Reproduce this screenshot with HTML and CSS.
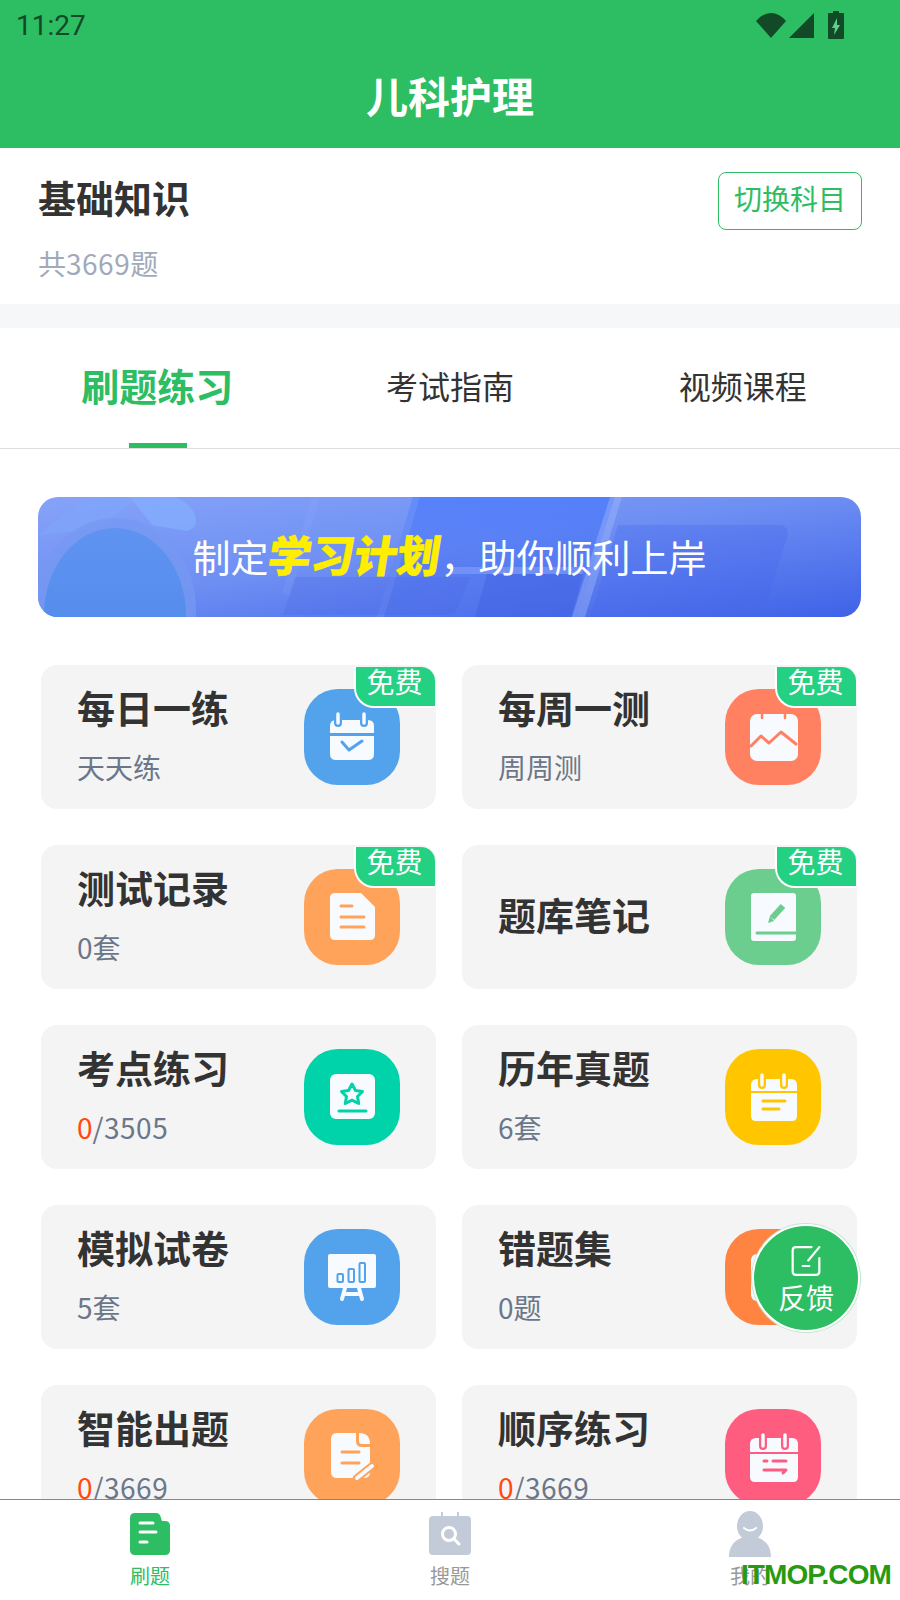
FILE: index.html
```html
<!DOCTYPE html>
<html lang="zh-CN">
<head>
  <meta charset="UTF-8">
  <meta name="viewport" content="width=device-width, initial-scale=1.0">
  <title>儿科护理</title>
  <link rel="stylesheet" href="styles.css">
</head>
<body>

<div class="page">
  <header class="header">
    <div class="status-bar">
      <span class="time">11:27</span>
      <div class="status-icons">
        <svg width="32" height="26" viewBox="0 0 32 26"><path d="M16 26 1 9Q8 1 16 1t15 8z"/></svg>
        <svg width="25" height="25" viewBox="0 0 25 25"><path d="M25 0v25H0z"/></svg>
        <svg width="18" height="28" viewBox="0 0 18 28"><path d="M6 0h6v2h4a1 1 0 0 1 1 1v24a1 1 0 0 1-1 1H2a1 1 0 0 1-1-1V3a1 1 0 0 1 1-1h4z"/><path class="bolt" d="M10 7 5 17h3l-1 7 6-10h-3z"/></svg>
      </div>
    </div>
    <h1 class="page-title">儿科护理</h1>
  </header>

  <main class="content">
    <section class="subject">
      <div>
        <h2 class="subject-name">基础知识</h2>
        <p class="subject-count">共<span class="digits">3669</span>题</p>
      </div>
      <button class="switch-btn">切换科目</button>
    </section>

    <nav class="tabs">
      <div class="tab active">刷题练习</div>
      <div class="tab">考试指南</div>
      <div class="tab">视频课程</div>
    </nav>

    <div class="banner">
      <svg class="banner-art" width="823" height="120" viewBox="0 0 823 120">
        <defs>
          <linearGradient id="deep" x1="0" y1="0" x2="0" y2="1">
            <stop offset="0" stop-color="#3f72ff" stop-opacity=".6"/>
            <stop offset="1" stop-color="#3f62e8" stop-opacity=".15"/>
          </linearGradient>
          <linearGradient id="face" x1="0" y1="0" x2="0" y2="1">
            <stop offset="0" stop-color="#5f93f2"/>
            <stop offset="1" stop-color="#4c88e6"/>
          </linearGradient>
        </defs>
        <!-- clock -->
        <path d="M0 38 50 0h50L60 32z" fill="#7fa6fa" opacity=".6"/>
        <path d="M92 0h46q20 10 20 24 0 8-10 10l-34-6z" fill="#83adfd" opacity=".8"/>
        <ellipse cx="77" cy="112" rx="81" ry="91" fill="#7598f2" opacity=".75"/>
        <ellipse cx="77" cy="118" rx="71" ry="87" fill="url(#face)"/>
        <!-- slanted panels -->
        <path d="M375 0h202l-38 120H339z" fill="url(#deep)"/>
        <path d="M375 0h7l-36 120h-7z" fill="#9db6fb" opacity=".2"/>
        <path d="M572 0h12l-37 120h-13z" fill="#a5bbfb" opacity=".4"/>
        <path d="M274 0h8l-30 100-8-4z" fill="#9db6fb" opacity=".12"/>
        <path d="M412 70h128q5 0 5 7H412z" fill="#a5bbfb" opacity=".35"/>
        <path d="M245 118l12-38h175l-12 30q-3 8-12 8z" fill="#3f5fe0" opacity=".2"/>
        <path d="M437 120l12-43h96l-12 43z" fill="#3c5ce0" opacity=".4"/>
        <path d="M580 28h160q12 0 9 12l-25 80H552z" fill="#4568ea" opacity=".3"/>
      </svg>
      <p class="banner-text">制定<em>学习计划</em>，助你顺利上岸</p>
    </div>

    <div class="grid">
      <div class="card">
        <div>
          <h3 class="card-title">每日一练</h3>
          <p class="card-sub">天天练</p>
        </div>
        <div class="tile blue">
          <svg width="96" height="96" viewBox="0 0 96 96">
            <path class="glyph" d="M26 44v-7q0-6 6-6h32q6 0 6 6v7zM26 47h44v18q0 6-6 6H32q-6 0-6-6z"/>
            <path class="halo" d="M34 25v9M60 25v9"/>
            <path class="ring" d="M34 25v9M60 25v9"/>
            <path class="mark" d="M38 53l7 8 13-9"/>
          </svg>
        </div>
        <span class="free">免费</span>
      </div>

      <div class="card">
        <div>
          <h3 class="card-title">每周一测</h3>
          <p class="card-sub">周周测</p>
        </div>
        <div class="tile coral">
          <svg width="96" height="96" viewBox="0 0 96 96">
            <rect class="glyph" x="25" y="25" width="48" height="47" rx="7"/>
            <path class="mark thin" d="M37 25v4M60 25v4"/>
            <path class="mark" d="M26 57l10-10 8 7 12-11 15 12"/>
          </svg>
        </div>
        <span class="free">免费</span>
      </div>

      <div class="card">
        <div>
          <h3 class="card-title">测试记录</h3>
          <p class="card-sub">0套</p>
        </div>
        <div class="tile orange">
          <svg width="96" height="96" viewBox="0 0 96 96">
            <path class="glyph" d="M31 24h26l14 14v28q0 5-5 5H31q-5 0-5-5V29q0-5 5-5z"/>
            <path class="mark" d="M37 37h11M37 48h23M37 58h23"/>
          </svg>
        </div>
        <span class="free">免费</span>
      </div>

      <div class="card">
        <h3 class="card-title">题库笔记</h3>
        <div class="tile green">
          <svg width="96" height="96" viewBox="0 0 96 96">
            <rect class="glyph" x="26" y="24" width="45" height="48" rx="3"/>
            <path class="mark" d="M32 64h39"/>
            <path class="mark pen" d="M58 37 47 49"/>
            <path class="solid" d="M45 47l-2 7 6-2z"/>
          </svg>
        </div>
        <span class="free">免费</span>
      </div>

      <div class="card">
        <div>
          <h3 class="card-title">考点练习</h3>
          <p class="card-sub"><span class="done">0</span><span class="digits">/3505</span></p>
        </div>
        <div class="tile teal">
          <svg width="96" height="96" viewBox="0 0 96 96">
            <rect class="glyph" x="26" y="25" width="45" height="45" rx="6"/>
            <path class="mark" d="M48 35l3.500 6.500 7 1-5 5 1.200 7-6.700-3.300-6.700 3.300 1.200-7-5-5 7-1z"/>
            <path class="mark" d="M35 62h27"/>
          </svg>
        </div>
      </div>

      <div class="card">
        <div>
          <h3 class="card-title">历年真题</h3>
          <p class="card-sub">6套</p>
        </div>
        <div class="tile yellow">
          <svg width="96" height="96" viewBox="0 0 96 96">
            <path class="glyph" d="M26 42v-6q0-6 6-6h34q6 0 6 6v6zM26 44h46v23q0 5-5 5H31q-5 0-5-5z"/>
            <path class="halo" d="M37 26v10M59 26v10"/>
            <path class="ring" d="M37 26v10M59 26v10"/>
            <path class="mark" d="M38 52h22M38 60h16"/>
          </svg>
        </div>
      </div>

      <div class="card">
        <div>
          <h3 class="card-title">模拟试卷</h3>
          <p class="card-sub">5套</p>
        </div>
        <div class="tile blue">
          <svg width="96" height="96" viewBox="0 0 96 96">
            <rect class="glyph" x="24" y="25" width="48" height="34" rx="2"/>
            <rect class="bar" x="33.500" y="45" width="5.500" height="8" rx="1"/>
            <rect class="bar" x="44.500" y="40" width="5.500" height="13" rx="1"/>
            <rect class="bar" x="55.500" y="34" width="5.500" height="19" rx="1"/>
            <path class="leg" d="M41 59l-3 11M55 59l3 11M40 65h16"/>
          </svg>
        </div>
      </div>

      <div class="card">
        <div>
          <h3 class="card-title">错题集</h3>
          <p class="card-sub">0题</p>
        </div>
        <div class="tile deep-orange">
          <svg width="96" height="96" viewBox="0 0 96 96">
            <rect class="glyph" x="26" y="25" width="45" height="47" rx="6"/>
          </svg>
        </div>
      </div>

      <div class="card">
        <div>
          <h3 class="card-title">智能出题</h3>
          <p class="card-sub"><span class="done">0</span><span class="digits">/3669</span></p>
        </div>
        <div class="tile orange">
          <svg width="96" height="96" viewBox="0 0 96 96">
            <path class="glyph" d="M33 24h19v8q0 6 6 6h8v25q0 6-6 6H33q-6 0-6-6V30q0-6 6-6zM55 24q11 0 11 11h-8q-3 0-3-3z"/>
            <path class="mark" d="M38 43h17M38 54h17"/>
            <path class="halo" d="M53 69 68 57"/>
            <path class="leg" d="M53 69 68 57"/>
          </svg>
        </div>
      </div>

      <div class="card">
        <div>
          <h3 class="card-title">顺序练习</h3>
          <p class="card-sub"><span class="done">0</span><span class="digits">/3669</span></p>
        </div>
        <div class="tile pink">
          <svg width="96" height="96" viewBox="0 0 96 96">
            <path class="glyph" d="M25 43v-8q0-6 6-6h36q6 0 6 6v8zM25 45h48v23q0 5-5 5H30q-5 0-5-5z"/>
            <path class="halo" d="M38 26v11M60 26v11"/>
            <path class="ring" d="M38 26v11M60 26v11"/>
            <path class="mark" d="M39 52h3M48 52h13M39 61h22l-3 3"/>
          </svg>
        </div>
      </div>
    </div>
  </main>

  <footer class="bottom-nav">
    <div class="nav-item on">
      <svg width="42" height="44" viewBox="0 0 42 44">
        <path fill="#2dbd62" d="M6 1h21q4 0 5 5l1 3h3q5 0 5 5v24q0 5-5 5H6q-5 0-5-5V6q0-5 5-5z"/>
        <path fill="none" stroke="#fff" stroke-width="3" stroke-linecap="round" d="M11 11h13M11 20h16M11 30h7"/>
      </svg>
      <span>刷题</span>
    </div>
    <div class="nav-item">
      <svg width="44" height="44" viewBox="0 0 44 44">
        <path fill="#c3cbd8" d="M5 4h8V0h2v4h14V0h2v4h8q4 0 4 4v31q0 4-4 4H5q-4 0-4-4V8q0-4 4-4z"/>
        <circle cx="21" cy="22" r="6.500" fill="none" stroke="#fff" stroke-width="3"/>
        <path stroke="#fff" stroke-width="3" stroke-linecap="round" d="M26 27l5 5"/>
      </svg>
      <span>搜题</span>
    </div>
    <div class="nav-item">
      <svg width="44" height="46" viewBox="0 0 44 46">
        <ellipse cx="22" cy="15" rx="13" ry="15" fill="#c3cbd8"/>
        <path fill="#c3cbd8" d="M1 46q0-14 12-19h18q12 5 12 19z"/>
        <path fill="none" stroke="#fff" stroke-width="2" stroke-linecap="round" d="M16 17q6 5 12 0"/>
      </svg>
      <span>我的</span>
    </div>
  </footer>

  <div class="feedback">
    <svg width="30" height="30" viewBox="2 2 26 27">
      <path d="M27 13v12q0 3-3 3H6q-3 0-3-3V6q0-3 3-3h14M27 3 17 15M12 20h6"/>
    </svg>
    <span>反馈</span>
  </div>

  <div class="watermark">ITMOP.COM</div>
</div>

</body>
</html>
```

FILE: styles.css
```css
* {
  box-sizing: border-box;
}

body {
  margin: 0;
  font-family: "Noto Sans CJK SC", "Noto Sans", sans-serif;
  background-color: #fff;
  color: #333;
}

h1, h2, h3, p {
  margin: 0;
}

.page {
  position: relative;
  width: 900px;
  height: 1600px;
  display: flex;
  flex-direction: column;
  overflow: hidden;
}

.digits {
  letter-spacing: .5px;
}

/* header */
.header {
  height: 148px;
  flex: none;
  background-color: #2dbd62;
}

.status-bar {
  height: 50px;
  display: flex;
  align-items: center;
  justify-content: space-between;
  padding: 0 55px 0 16px;
}

.time {
  font-family: Roboto, sans-serif;
  font-size: 28px;
  color: #124a27;
}

.status-icons {
  display: flex;
  align-items: center;
  gap: 2px;
}

.status-icons svg {
  fill: #124a27;
}

.status-icons svg:last-child {
  margin-left: 11px;
}

.status-icons .bolt {
  fill: #5fd08a;
}

.page-title {
  margin-top: 15px;
  font-size: 42px;
  line-height: 60px;
  font-weight: 700;
  text-align: center;
  color: #fff;
}

/* main area */
.content {
  flex: 1;
  min-height: 0;
  overflow: hidden;
}

.subject {
  height: 180px;
  display: flex;
  justify-content: space-between;
  align-items: flex-start;
  padding: 24px 38px 0 38px;
  border-bottom: 24px solid #f6f7f9;
}

.subject-name {
  margin-top: -3px;
  font-size: 38px;
  line-height: 56px;
  font-weight: 700;
}

.subject-count {
  margin-top: 18px;
  font-size: 28px;
  line-height: 40px;
  color: #a0aaba;
}

.switch-btn {
  width: 144px;
  height: 58px;
  padding: 0 0 6px;
  font-family: inherit;
  font-size: 28px;
  color: #2dbd62;
  background-color: #fff;
  border: 1px solid #2dbd62;
  border-radius: 8px;
}

.tabs {
  height: 121px;
  display: flex;
  padding: 0 11px;
  border-bottom: 1px solid #ddd;
}

.tab {
  position: relative;
  flex: 1;
  display: flex;
  align-items: center;
  justify-content: center;
  padding-bottom: 6px;
  font-size: 32px;
  color: #333;
}

.tab.active {
  padding-bottom: 8px;
  font-size: 38px;
  font-weight: 700;
  color: #2dbd62;
}

.tab.active::after {
  content: "";
  position: absolute;
  left: 118px;
  bottom: 0;
  width: 58px;
  height: 5px;
  background-color: #2dbd62;
}

.banner {
  position: relative;
  height: 120px;
  margin: 48px 39px 48px 38px;
  display: flex;
  align-items: center;
  justify-content: center;
  border-radius: 20px;
  overflow: hidden;
  background: linear-gradient(172deg, #86a3f8 0%, #6f90f3 45%, #3f62e8 100%);
}

.banner-art {
  position: absolute;
  left: 0;
  top: 0;
}

.banner-text {
  position: relative;
  padding-bottom: 6px;
  font-size: 38px;
  line-height: 60px;
  color: #fff;
}

.banner-text em {
  display: inline-block;
  font-size: 43px;
  font-weight: 900;
  font-style: normal;
  color: #ffee00;
  -webkit-text-stroke: .6px #ffee00;
  transform: skewX(-9deg);
}

/* cards */
.grid {
  display: grid;
  grid-template-columns: 395px 395px;
  grid-auto-rows: 144px;
  column-gap: 26px;
  row-gap: 36px;
  padding: 0 41px;
}

.card {
  position: relative;
  display: flex;
  align-items: center;
  justify-content: space-between;
  padding: 0 36px;
  border-radius: 16px;
  background-color: #f4f4f4;
}

.card-title {
  margin-top: -6px;
  font-size: 38px;
  line-height: 50px;
  font-weight: 700;
}

.card-sub {
  margin-top: 15px;
  font-size: 28px;
  line-height: 40px;
  color: #6b7789;
}

.done {
  color: #ff4a0d;
}

.free {
  position: absolute;
  top: 2px;
  right: 1px;
  width: 81px;
  height: 41px;
  display: flex;
  align-items: center;
  justify-content: center;
  padding: 0 2px 12px 0;
  font-size: 28px;
  line-height: 1;
  color: #fff;
  background-color: #24d183;
  border-left: 2px solid #fff;
  border-bottom: 2px solid #fff;
  border-radius: 0 14px 0 20px;
}

.tile {
  width: 96px;
  height: 96px;
  flex: none;
  border-radius: 34px;
  background-color: currentColor;
}

.tile svg {
  display: block;
}

.blue { color: #52a3ec; }
.coral { color: #ff8162; }
.orange { color: #ffa25a; }
.green { color: #6bce8e; }
.teal { color: #00d2aa; }
.yellow { color: #ffc600; }
.deep-orange { color: #ff8442; }
.pink { color: #ff5d80; }

.glyph {
  fill: #f7faff;
}

.solid {
  fill: currentColor;
}

.bar {
  fill: none;
  stroke: currentColor;
  stroke-width: 2;
}

.mark {
  fill: none;
  stroke: currentColor;
  stroke-width: 3;
  stroke-linecap: round;
  stroke-linejoin: round;
}

.mark.thin {
  stroke-width: 2.500;
}

.mark.pen {
  stroke-width: 6;
  stroke-linecap: butt;
}

.halo {
  fill: none;
  stroke: currentColor;
  stroke-width: 8;
  stroke-linecap: round;
}

.ring {
  fill: none;
  stroke: #f7faff;
  stroke-width: 3.500;
  stroke-linecap: round;
}

.leg {
  fill: none;
  stroke: #f7faff;
  stroke-width: 4;
  stroke-linecap: round;
}

/* bottom bar */
.bottom-nav {
  height: 101px;
  flex: none;
  display: flex;
  background-color: #fff;
  border-top: 1px solid #888;
}

.nav-item {
  flex: 1;
  display: flex;
  flex-direction: column;
  align-items: center;
  padding-top: 11px;
  font-size: 20px;
  line-height: 28px;
  color: #999;
}

.nav-item svg {
  height: 46px;
  margin-bottom: 5px;
}

.nav-item.on {
  color: #2dbd62;
}

/* floating bits */
.feedback {
  position: absolute;
  left: 752px;
  top: 1224px;
  width: 108px;
  height: 108px;
  display: flex;
  flex-direction: column;
  align-items: center;
  justify-content: center;
  gap: 2px;
  padding-top: 6px;
  font-size: 28px;
  line-height: 38px;
  color: #fff;
  background-color: #2dbd62;
  border: 2px solid #fff;
  border-radius: 50%;
  box-shadow: 0 0 0 1px #bfe9cf;
}

.feedback svg {
  fill: none;
  stroke: #fff;
  stroke-width: 2;
  stroke-linecap: round;
}

.watermark {
  position: absolute;
  right: 9px;
  top: 1557px;
  font-family: "Liberation Sans", sans-serif;
  font-size: 28px;
  font-weight: 700;
  line-height: 36px;
  letter-spacing: -.9px;
  color: #279a10;
}
```
